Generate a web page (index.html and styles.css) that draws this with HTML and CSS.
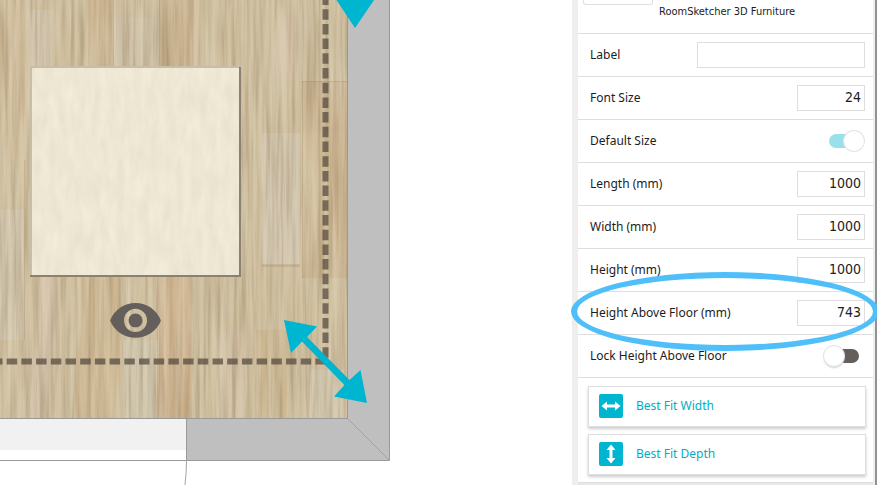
FILE: index.html
```html
<!DOCTYPE html>
<html lang="en">
<head>
<meta charset="utf-8">
<title>Furniture properties</title>
<link rel="stylesheet" href="styles.css">
</head>
<body>
<main class="app">
  <svg class="plan" role="img" aria-label="Floor plan">
    <defs>
      <filter id="grain" x="0" y="0" width="100%" height="100%" color-interpolation-filters="sRGB">
        <feTurbulence type="fractalNoise" baseFrequency="0.24 0.009" numOctaves="3" seed="8"/>
        <feColorMatrix values="0 0 0 0 0.54  0 0 0 0 0.46  0 0 0 0 0.32  0.85 0 0 0 -0.32"/>
      </filter>
      <filter id="shine" x="0" y="0" width="100%" height="100%" color-interpolation-filters="sRGB">
        <feTurbulence type="fractalNoise" baseFrequency="0.16 0.008" numOctaves="3" seed="31"/>
        <feColorMatrix values="0 0 0 0 0.88  0 0 0 0 0.84  0 0 0 0 0.74  0 1.2 0 0 -0.42"/>
      </filter>
      <filter id="weave" x="0" y="0" width="100%" height="100%" color-interpolation-filters="sRGB">
        <feTurbulence type="fractalNoise" baseFrequency="0.12 0.035" numOctaves="3" seed="5"/>
        <feColorMatrix values="0 0 0 0 0.89  0 0 0 0 0.86  0 0 0 0 0.77  0.9 0 0 0 -0.15"/>
      </filter>
    </defs>

    <!-- wooden floor -->
    <rect width="348" height="418" fill="#cfbf9f"/>
    <g opacity="0.65">
      <rect x="0" y="0" width="28" height="160" fill="#d4c0a0"/>
      <rect x="0" y="210" width="24" height="130" fill="#d3c9b6"/>
      <rect x="30" y="10" width="22" height="56" fill="#d5c8b5"/>
      <rect x="88" y="0" width="25" height="67" fill="#c9ac84"/>
      <rect x="114" y="18" width="46" height="49" fill="#cfc5af"/>
      <rect x="160" y="0" width="38" height="67" fill="#cbb08c"/>
      <rect x="276" y="14" width="24" height="66" fill="#d3bda5"/>
      <rect x="302" y="81" width="46" height="52" fill="#c7aa86"/>
      <rect x="262" y="133" width="38" height="132" fill="#d7ccbb"/>
      <rect x="302" y="133" width="46" height="145" fill="#cab08a"/>
      <rect x="28" y="350" width="22" height="68" fill="#d5bfaa"/>
      <rect x="40" y="276" width="18" height="74" fill="#d5bfaa"/>
      <rect x="76" y="276" width="44" height="142" fill="#cdb48c"/>
      <rect x="124" y="340" width="34" height="78" fill="#d2ccb6"/>
      <rect x="158" y="276" width="34" height="142" fill="#cca982"/>
      <rect x="220" y="330" width="24" height="88" fill="#d5bfa7"/>
      <rect x="256" y="330" width="34" height="88" fill="#c9b28a"/>
      <rect x="310" y="370" width="34" height="48" fill="#d5ccb9"/>
    </g>
    <rect width="348" height="418" filter="url(#grain)"/>
    <rect width="348" height="418" filter="url(#shine)"/>
    <g fill="none" stroke="#9b8058" stroke-opacity="0.25">
      <path d="M113.500 0v67M159.500 0v67M302.500 81v197M302 81.500h46M157.500 276v142M24.500 160v180"/>
      <path d="M262 265.500h38" stroke-width="3"/>
    </g>

    <!-- clearance line along the walls -->
    <g fill="none" stroke="#50463c" stroke-opacity="0.7" stroke-width="6">
      <path d="M325.500 -5.500V359" stroke-dasharray="10.500 4.200"/>
      <path d="M-8 361.500H328" stroke-dasharray="10.500 4.200"/>
    </g>

    <!-- walls and opening -->
    <path d="M348 0h41v460H187v-42h161z" fill="#bfbfbf"/>
    <path d="M0 419h186v31H0z" fill="#f1f1f1"/>
    <g fill="none" stroke="#999">
      <path d="M347.500 0v418.500H0M389.500 0v460.500H0M186.500 418v43"/>
      <path d="M348 419l41 41M186.500 460q0 12 -1.500 25" stroke="#a3a3a3"/>
    </g>

    <!-- rug -->
    <rect x="30" y="66" width="211" height="211" fill="#c6bea6"/>
    <path d="M239 67h2v210H30v-2h209z" fill="#8b8170"/>
    <rect x="32" y="68" width="207" height="207" fill="#f2ecda"/>
    <rect x="32" y="68" width="207" height="207" filter="url(#weave)"/>

    <path transform="translate(107.800 292.700) scale(2.310)" fill="#655f5c" d="M12 4.500C7 4.500 2.730 7.610 1 12c1.730 4.390 6 7.500 11 7.500s9.270-3.110 11-7.500c-1.730-4.390-6-7.500-11-7.500zM12 17c-2.760 0-5-2.240-5-5s2.240-5 5-5 5 2.240 5 5-2.240 5-5 5zm0-8c-1.660 0-3 1.340-3 3s1.340 3 3 3 3-1.340 3-3-1.340-3-3-3z"/>
    <g fill="#00b5d0">
      <path d="M336.500 0h37.500L355 28z"/>
      <path d="M284 320l33 6.500-10 10.500 42.500 43 11-10 6.500 33-33-6.500 10.500-11.500-42.500-43.500-11 11.500z"/>
    </g>
  </svg>

  <form class="panel">
    <header class="product">
      <div class="thumb"></div>
      <p class="maker">RoomSketcher 3D Furniture</p>
    </header>
    <div class="row"><label for="label">Label</label><input class="field wide" id="label" type="text"></div>
    <div class="row"><label for="font">Font Size</label><input class="field" id="font" type="text" value="24"></div>
    <div class="row"><label for="default">Default Size</label><input class="switch" id="default" type="checkbox" checked></div>
    <div class="row"><label for="length">Length (mm)</label><input class="field" id="length" type="text" value="1000"></div>
    <div class="row"><label for="width">Width (mm)</label><input class="field" id="width" type="text" value="1000"></div>
    <div class="row"><label for="height">Height (mm)</label><input class="field" id="height" type="text" value="1000"></div>
    <div class="row marked"><label for="above">Height Above Floor (mm)</label><input class="field" id="above" type="text" value="743"></div>
    <div class="row"><label for="lock">Lock Height Above Floor</label><input class="switch" id="lock" type="checkbox"></div>
    <div class="actions">
      <button class="action" type="button">
        <svg class="icon" viewBox="0 0 24 24" aria-hidden="true"><rect width="24" height="24" rx="2" fill="#00b5d0"/><path d="M2.500 12l5.500-4.500v3h8v-3l5.500 4.500-5.500 4.500v-3H8v3z" fill="#fff"/></svg>
        Best Fit Width
      </button>
      <button class="action" type="button">
        <svg class="icon" viewBox="0 0 24 24" aria-hidden="true"><rect width="24" height="24" rx="2" fill="#00b5d0"/><path d="M12 2.500l4.500 5.500h-3v8h3L12 21.500 7.500 16h3V8h-3z" fill="#fff"/></svg>
        Best Fit Depth
      </button>
    </div>
  </form>
</main>
</body>
</html>
```
FILE: styles.css
```css
* {
  box-sizing: border-box;
}

body {
  margin: 0;
  background: #fff;
  color: #1c1c1c;
  font: 12px/16px "Noto Sans", sans-serif;
}

.app {
  display: flex;
  height: 100vh;
  overflow: hidden;
}

.plan {
  flex: 1;
  min-width: 0;
  height: 100%;
}

.panel {
  flex: 0 0 305px;
  display: flex;
  flex-direction: column;
  border-left: 6px solid #efeeed;
  border-right: 2px solid #929292;
  box-shadow: inset -2px 0 #efefef;
  background: #e8e8e8;
}

.product,
.row,
.actions {
  margin-right: 2px;
  background: #fff;
  border-bottom: 1px solid #dedede;
}

.product {
  display: flex;
  gap: 6px;
  height: 34px;
  padding-left: 5px;
}

.thumb {
  width: 70px;
  height: 5px;
  border: 1px solid #dedede;
  border-top: 0;
  border-radius: 0 0 3px 3px;
}

.maker {
  margin: 4px 0 0;
  font-family: "DejaVu Sans Condensed", "DejaVu Sans", sans-serif;
  font-size: 11px;
}

.row {
  position: relative;
  display: flex;
  align-items: center;
  justify-content: space-between;
  height: 43px;
  padding: 0 8px 0 12px;
}

.field {
  width: 68px;
  height: 26px;
  padding: 0 3px 3px;
  border: 1px solid #dedede;
  border-radius: 0;
  background: #fff;
  color: #1c1c1c;
  font-family: "DejaVu Sans Condensed", "DejaVu Sans", sans-serif;
  font-size: 14px;
  text-align: right;
}

.wide {
  width: 168px;
}

.marked::after {
  content: "";
  position: absolute;
  z-index: 1;
  inset: -20px -6px -17px -7px;
  border: 6px solid #4fbff9;
  border-radius: 50%;
  pointer-events: none;
}

.switch {
  appearance: none;
  position: relative;
  width: 30px;
  height: 14px;
  margin: 0 6px;
  border-radius: 7px;
  background: #655f5c;
}

.switch::before {
  content: "";
  position: absolute;
  top: -3px;
  left: -5px;
  width: 20px;
  height: 20px;
  border-radius: 50%;
  background: #fff;
  box-shadow: 0 0 0 1px #e4e4e4, 0 2px 2px #ccc;
}

.switch:checked {
  background: #99e1ea;
}

.switch:checked::before {
  left: 15px;
  box-shadow: 0 0 0 1px #e4e4e4;
}

.actions {
  display: flex;
  flex-direction: column;
  gap: 7px;
  padding: 8px 7px 7px 10px;
}

.action {
  display: flex;
  align-items: center;
  gap: 13px;
  height: 41px;
  padding: 0 10px 2px;
  border: 1px solid #dedede;
  border-radius: 0;
  background: #fff;
  box-shadow: 0 2px 3px #ccc;
  color: #00aec4;
  font: inherit;
}

.icon {
  width: 24px;
  height: 24px;
}
```
